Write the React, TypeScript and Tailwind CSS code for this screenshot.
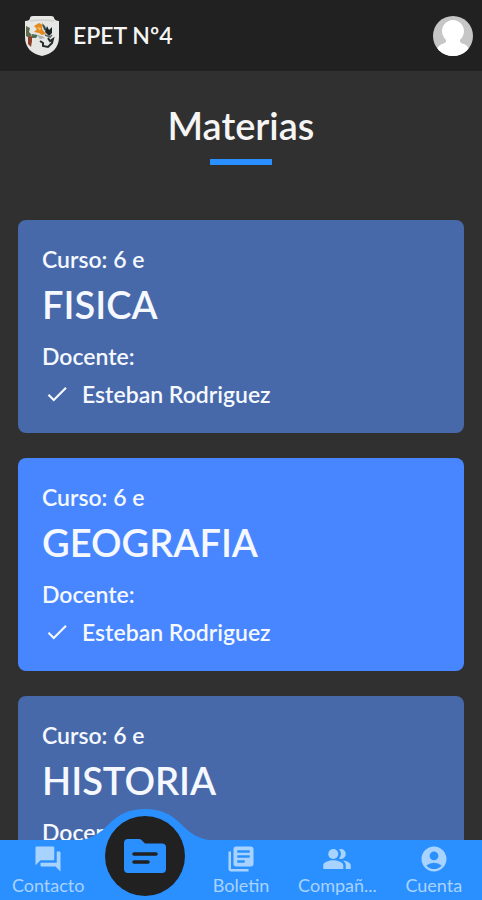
import React from 'react';
import {
  MdAccountCircle,
  MdCheck,
  MdLibraryBooks,
  MdPeopleAlt,
  MdQuestionAnswer,
} from 'react-icons/md';

interface Subject {
  id: number;
  course: string;
  name: string;
  teacher: string;
}

interface NavItem {
  label: string;
  href: string;
  icon: React.ComponentType<{ className?: string }>;
  active?: boolean;
}

const FolderIcon: React.FC<{ className?: string }> = ({ className }) => (
  <svg className={className} viewBox="0 0 50 50" aria-hidden="true">
    <path
      d="M8 8H19Q20.5 8 21.5 9L25 12.5H42Q46 12.5 46 16.5V38Q46 42 42 42H8Q4 42 4 38V12Q4 8 8 8Z"
      fill="currentColor"
    />
    <path d="M14 23H36M14 31H28" stroke="#212121" strokeWidth="3.5" strokeLinecap="round" />
  </svg>
);

const SUBJECTS: Subject[] = [
  { id: 1, course: '6 e', name: 'FISICA', teacher: 'Esteban Rodriguez' },
  { id: 2, course: '6 e', name: 'GEOGRAFIA', teacher: 'Esteban Rodriguez' },
  { id: 3, course: '6 e', name: 'HISTORIA', teacher: 'Esteban Rodriguez' },
];

const NAV_ITEMS: NavItem[] = [
  { label: 'Contacto', href: '#contacto', icon: MdQuestionAnswer },
  { label: 'Materias', href: '#materias', icon: FolderIcon, active: true },
  { label: 'Boletin', href: '#boletin', icon: MdLibraryBooks },
  { label: 'Compañ...', href: '#companeros', icon: MdPeopleAlt },
  { label: 'Cuenta', href: '#cuenta', icon: MdAccountCircle },
];

const SchoolCrest: React.FC = () => (
  <svg className="h-[42px] w-[34px]" viewBox="0 0 34 42" aria-hidden="true">
    <path
      d="M5 3Q5 1 8 1H26Q29 1 29 3Q30 6 34 6V22C34 33 27 39 17 41C7 39 0 33 0 22V6Q5 6 5 3Z"
      fill="#e6e7e5"
    />
    <path d="M5 6Q17 4 29 6" stroke="#cfd1cf" strokeWidth="1.5" fill="none" />
    <path d="M1 11L5 13L4 17L7 20L4 23L1 21Z" fill="#5c6b4c" />
    <path d="M3 22L7 21L7 26L6 32L3 29Z" fill="#8c3d27" />
    <path d="M7 19L13 20L11 23L7 23Z" fill="#4f6f54" />
    <path d="M9 11L14 8L18 10L17 14L21 19L17 20L14 18L9 17L12 14Z" fill="#e38a1f" />
    <path d="M12 12L16 13L15 16Z" fill="#f3c264" />
    <path d="M17 8L20 11L22 16L19 15Z" fill="#35505a" />
    <path d="M22 11L24 15L27 12L27 18L24 21L20 17Z" fill="#1d2526" />
    <path d="M12 20L17 21L20 23L15 24Z" fill="#a9b3ab" />
    <path d="M15 26L18 28L18 31L23 32L27 28L28 24L25 26L23 23" stroke="#252a2d" strokeWidth="2" fill="none" />
    <path d="M20 20L25 22L27 20" stroke="#5e6464" strokeWidth="1.5" fill="none" />
  </svg>
);

const Avatar: React.FC = () => (
  <svg className="h-10 w-10" viewBox="0 0 40 40" aria-hidden="true">
    <defs>
      <clipPath id="avatar-clip">
        <circle cx="20" cy="20" r="20" />
      </clipPath>
    </defs>
    <g clipPath="url(#avatar-clip)">
      <rect width="40" height="40" fill="#c6c6c6" />
      <path
        d="M20 4C26 4 31 9 31 15C31 19 29 22 27 24C27 27 28 27 31 28C35 30 37 33 38 40H2C3 33 5 30 9 28C12 27 13 27 13 24C11 22 9 19 9 15C9 9 14 4 20 4Z"
        fill="#fff"
      />
    </g>
  </svg>
);

const SubjectCard: React.FC<{ subject: Subject }> = ({ subject }) => (
  <li className="rounded-lg bg-[#4769a9] px-6 pt-6 pb-[21px] text-[#f5f8ff] even:bg-[#4786ff]">
    <p className="text-[23px] leading-[30px] font-semibold">Curso: {subject.course}</p>
    <h2 className="mt-1 text-[38px] leading-[52px] font-semibold">{subject.name}</h2>
    <p className="mt-[6px] text-[23px] leading-[40px] font-semibold">Docente:</p>
    <p className="flex items-center gap-3 pl-[2px] text-[23px] leading-[36px] font-semibold">
      <MdCheck className="h-[26px] w-[26px]" />
      {subject.teacher}
    </p>
  </li>
);

const BottomNav: React.FC = () => (
  <nav className="relative flex h-[60px] shrink-0 bg-[#2b90ff] text-[#a9d3ff]">
    {NAV_ITEMS.map(({ label, href, icon: Icon, active }) =>
      active ? (
        <a key={label} href={href} aria-label={label} aria-current="page" className="relative min-w-0 flex-1">
          {/* Bump rising behind the active button */}
          <svg
            className="absolute bottom-full left-1/2 h-[31px] w-[130px] -translate-x-1/2"
            viewBox="0 0 130 31"
            aria-hidden="true"
          >
            <path d="M0 31C12 30 20 24 29 15C39 5 50 0 65 0C80 0 91 5 101 15C110 24 118 30 130 31Z" fill="#2b90ff" />
          </svg>
          <span className="absolute bottom-1 left-1/2 flex h-20 w-20 -translate-x-1/2 items-center justify-center rounded-full bg-[#212121] text-[#2b90ff]">
            <Icon className="h-[50px] w-[50px]" />
          </span>
        </a>
      ) : (
        <a key={label} href={href} className="flex min-w-0 flex-1 flex-col items-center pt-1">
          <Icon className="h-[30px] w-[30px]" />
          <span className="text-[18px] leading-[22px]">{label}</span>
        </a>
      ),
    )}
  </nav>
);

export default function App() {
  return (
    <div className="flex h-screen flex-col bg-[#303030] font-['Lato',sans-serif] text-[#f5f5f5]">
      <header className="flex h-[71px] shrink-0 items-center justify-between bg-[#212121] pr-[9px] pl-[25px]">
        <a href="#inicio" className="flex items-center gap-[14px] text-[23px] font-semibold">
          <SchoolCrest />
          EPET Nº4
        </a>
        <button type="button" aria-label="Cuenta" className="rounded-full">
          <Avatar />
        </button>
      </header>

      <main className="min-h-0 flex-1 overflow-y-auto px-[18px] pb-10 [scrollbar-width:none]">
        <div className="flex flex-col items-center pt-7">
          <h1 className="text-[38px] leading-[52px] font-semibold">Materias</h1>
          <div className="mt-2 h-[6px] w-[62px] bg-[#2b90ff]" />
        </div>
        <ul className="mt-[55px] flex flex-col gap-[25px]">
          {SUBJECTS.map((subject) => (
            <SubjectCard key={subject.id} subject={subject} />
          ))}
        </ul>
      </main>

      <BottomNav />
    </div>
  );
}
